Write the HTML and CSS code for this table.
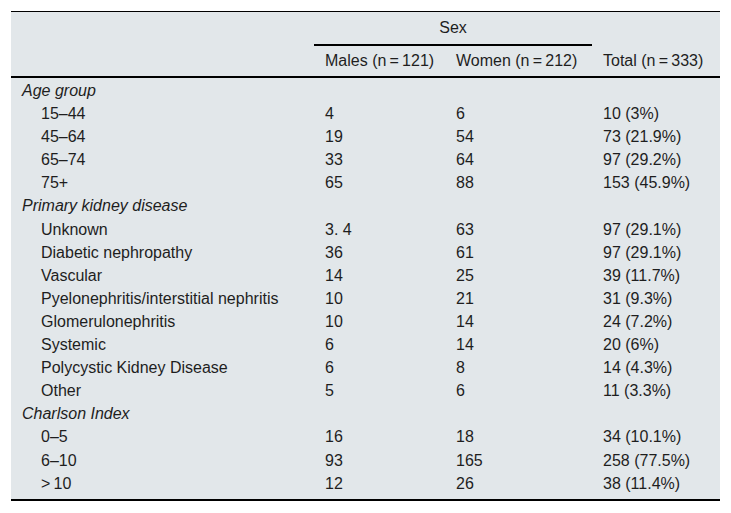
FILE: index.html
```html
<!DOCTYPE html>
<html>
<head>
<meta charset="utf-8">
<link rel="stylesheet" href="styles.css">
</head>
<body>
<div class="wrap">
<table class="data">
  <colgroup>
    <col class="c1"><col class="c2"><col class="c3"><col class="c4">
  </colgroup>
  <thead>
    <tr class="h1">
      <th rowspan="2"></th>
      <th colspan="2" class="sex"><span>Sex</span></th>
      <th rowspan="2" class="total">Total (n&#8201;=&#8201;333)</th>
    </tr>
    <tr class="h2">
      <th>Males (n&#8201;=&#8201;121)</th>
      <th>Women (n&#8201;=&#8201;212)</th>
    </tr>
  </thead>
  <tbody>
    <tr class="first"><td class="grp">Age group</td><td></td><td></td><td></td></tr>
    <tr><td class="sub">15–44</td><td>4</td><td>6</td><td>10 (3%)</td></tr>
    <tr><td class="sub">45–64</td><td>19</td><td>54</td><td>73 (21.9%)</td></tr>
    <tr><td class="sub">65–74</td><td>33</td><td>64</td><td>97 (29.2%)</td></tr>
    <tr><td class="sub">75+</td><td>65</td><td>88</td><td>153 (45.9%)</td></tr>
    <tr><td class="grp">Primary kidney disease</td><td></td><td></td><td></td></tr>
    <tr><td class="sub">Unknown</td><td>3. 4</td><td>63</td><td>97 (29.1%)</td></tr>
    <tr><td class="sub">Diabetic nephropathy</td><td>36</td><td>61</td><td>97 (29.1%)</td></tr>
    <tr><td class="sub">Vascular</td><td>14</td><td>25</td><td>39 (11.7%)</td></tr>
    <tr><td class="sub">Pyelonephritis/interstitial nephritis</td><td>10</td><td>21</td><td>31 (9.3%)</td></tr>
    <tr><td class="sub">Glomerulonephritis</td><td>10</td><td>14</td><td>24 (7.2%)</td></tr>
    <tr><td class="sub">Systemic</td><td>6</td><td>14</td><td>20 (6%)</td></tr>
    <tr><td class="sub">Polycystic Kidney Disease</td><td>6</td><td>8</td><td>14 (4.3%)</td></tr>
    <tr><td class="sub">Other</td><td>5</td><td>6</td><td>11 (3.3%)</td></tr>
    <tr><td class="grp">Charlson Index</td><td></td><td></td><td></td></tr>
    <tr><td class="sub">0–5</td><td>16</td><td>18</td><td>34 (10.1%)</td></tr>
    <tr><td class="sub">6–10</td><td>93</td><td>165</td><td>258 (77.5%)</td></tr>
    <tr class="last"><td class="sub">&gt;&#8201;10</td><td>12</td><td>26</td><td>38 (11.4%)</td></tr>
  </tbody>
</table>
</div>
</body>
</html>
```

FILE: styles.css
```css
html, body {
  margin: 0;
  padding: 0;
  background: #ffffff;
}

.wrap {
  padding: 11px;
}

.data {
  width: 709px;
  border-collapse: collapse;
  table-layout: fixed;
  background: #e2e7ea;
  font-family: "Liberation Sans", Arial, sans-serif;
  font-size: 16px;
  color: #1e1e1e;
  border-top: 1px solid #000000;
  border-bottom: 2px solid #000000;
}

.c1 { width: 303px; }
.c2 { width: 131px; }
.c3 { width: 147px; }
.c4 { width: 128px; }

.data th {
  font-weight: normal;
  text-align: left;
  line-height: 17px;
  padding: 0 11px;
  white-space: nowrap;
}

.h1 th {
  padding-top: 7px;
  padding-bottom: 8px;
}

.h1 th.sex {
  text-align: center;
  border-bottom: 2px solid #000000;
}

.h1 th.total {
  vertical-align: bottom;
  padding-bottom: 7px;
}

.h2 th {
  padding-top: 6px;
  padding-bottom: 7px;
}

thead {
  border-bottom: 2px solid #000000;
}

.data td {
  line-height: 17.1px;
  padding: 3px 11px;
  white-space: nowrap;
}

.data td.grp {
  font-style: italic;
}

.data td.sub {
  padding-left: 30px;
}

.first td {
  padding-top: 4px;
}

.last td {
  padding-bottom: 7px;
}
```
